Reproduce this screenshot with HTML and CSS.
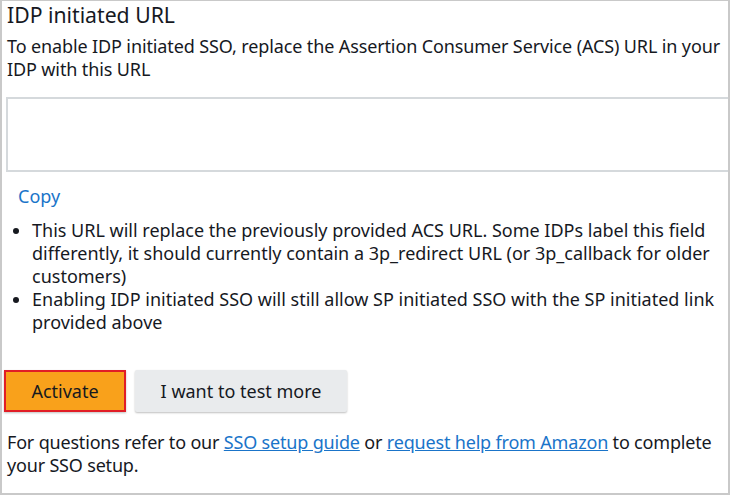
FILE: index.html
```html
<!DOCTYPE html>
<html lang="en">
<head>
<meta charset="utf-8">
<title>IDP initiated URL</title>
<link rel="stylesheet" href="styles.css">
</head>
<body>
<div class="panel">
  <h2 class="title">IDP initiated URL</h2>
  <p class="desc">To enable IDP initiated SSO, replace the Assertion Consumer Service (ACS) URL in your IDP with this URL</p>
  <div class="urlbox"></div>
  <a class="copy" href="#">Copy</a>
  <ul class="notes">
    <li>This URL will replace the previously provided ACS URL. Some IDPs label this field differently, it should currently contain a 3p_redirect URL (or 3p_callback for older customers)</li>
    <li>Enabling IDP initiated SSO will still allow SP initiated SSO with the SP initiated link provided above</li>
  </ul>
  <div class="actions">
    <button class="btn btn-primary">Activate</button>
    <button class="btn btn-secondary">I want to test more</button>
  </div>
  <p class="footer">For questions refer to our <a href="#">SSO setup guide</a> or <a href="#">request help from Amazon</a> to complete your SSO setup.</p>
</div>
</body>
</html>
```

FILE: styles.css
```css
html, body {
  margin: 0;
  padding: 0;
  background: #ffffff;
}

.panel {
  box-sizing: border-box;
  width: 730px;
  height: 495px;
  border: 2px solid #c9c9c9;
  border-top-width: 1px;
  padding: 0 0 0 5px;
  overflow: hidden;
  font-family: "Noto Sans", "Open Sans", sans-serif;
  font-size: 18px;
  line-height: 23px;
  color: #16191f;
}

.title {
  margin: 0;
  font-size: 21.2px;
  font-weight: 400;
  line-height: 28px;
}

.desc {
  margin: 6px 0 0;
  letter-spacing: -0.12px;
}

.urlbox {
  margin: 16px -30px 0 -1px;
  height: 71px;
  border: 2px solid #d5d9dc;
}

.copy {
  display: inline-block;
  margin: 13px 0 0 11px;
  color: #1a74c9;
  text-decoration: none;
}

.notes {
  margin: 11px 0 0;
  padding-left: 25px;
  padding-right: 6px;
}

.notes li {
  margin: 0;
}

.actions {
  display: flex;
  gap: 9px;
  margin: 36px 0 0 -3px;
  align-items: flex-start;
}

.btn {
  font-family: inherit;
  font-size: 18px;
  color: #16191f;
  height: 42px;
  padding: 0;
  border-radius: 2px;
  cursor: pointer;
}

.btn-primary {
  width: 122px;
  background: #f9a11b;
  border: 2px solid #e11d26;
  border-radius: 0;
  box-shadow: 0 1px 2px rgba(0, 0, 0, 0.25);
}

.btn-secondary {
  width: 212px;
  background: #e9ebed;
  border: none;
  box-shadow: 0 1px 2px rgba(0, 0, 0, 0.25);
}

.footer {
  margin: 19px 0 0;
  line-height: 23px;
  letter-spacing: -0.18px;
}

.footer a {
  display: inline-block;
  color: #1a74c9;
  text-decoration: underline;
}
```
